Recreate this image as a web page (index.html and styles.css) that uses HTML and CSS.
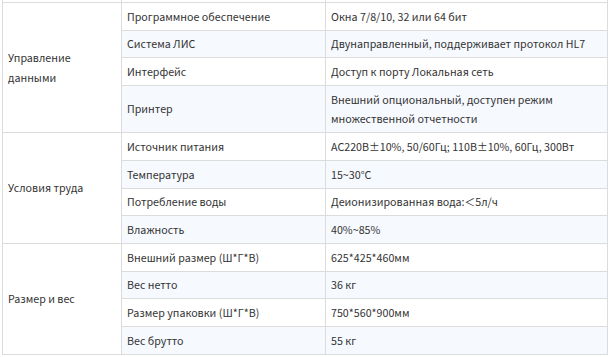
FILE: index.html
```html
<!DOCTYPE html>
<html lang="ru">
<head>
<meta charset="utf-8">
<link rel="stylesheet" href="styles.css">
</head>
<body>
<table class="spec">
  <colgroup>
    <col class="c1"><col class="c2"><col class="c3">
  </colgroup>
  <tbody>
    <tr class="cut"><td></td><td></td><td></td></tr>
    <tr>
      <td class="group" rowspan="4">Управление<br>данными</td>
      <td>Программное обеспечение</td>
      <td>Окна 7/8/10, 32 или 64 бит</td>
    </tr>
    <tr class="alt"><td>Система ЛИС</td><td>Двунаправленный, поддерживает протокол HL7</td></tr>
    <tr><td>Интерфейс</td><td>Доступ к порту Локальная сеть</td></tr>
    <tr class="alt"><td>Принтер</td><td>Внешний опциональный, доступен режим множественной отчетности</td></tr>
    <tr>
      <td class="group" rowspan="4">Условия труда</td>
      <td>Источник питания</td>
      <td>AC220В±10%, 50/60Гц; 110В±10%, 60Гц, 300Вт</td>
    </tr>
    <tr class="alt"><td>Температура</td><td>15~30°C</td></tr>
    <tr><td>Потребление воды</td><td>Деионизированная вода:＜5л/ч</td></tr>
    <tr class="alt"><td>Влажность</td><td>40%~85%</td></tr>
    <tr>
      <td class="group" rowspan="4">Размер и вес</td>
      <td>Внешний размер (Ш*Г*В)</td>
      <td>625*425*460мм</td>
    </tr>
    <tr class="alt"><td>Вес нетто</td><td>36 кг</td></tr>
    <tr><td>Размер упаковки (Ш*Г*В)</td><td>750*560*900мм</td></tr>
    <tr class="alt"><td>Вес брутто</td><td>55 кг</td></tr>
  </tbody>
</table>
</body>
</html>
```
FILE: styles.css
```css
html, body {
  margin: 0;
  padding: 0;
  background: #fff;
}
body {
  padding-left: 2px;
  font-family: "Noto Sans CJK SC", "Noto Sans", sans-serif;
  font-size: 10.7px;
  color: #333;
}
.spec {
  border-collapse: collapse;
  width: 605px;
  table-layout: fixed;
}
.c1 { width: 119px; }
.c2 { width: 204px; }
.c3 { width: 282px; }
.spec td {
  border: 1px solid #dcdcdc;
  padding: 3.55px 5px;
  line-height: 19.6px;
  vertical-align: middle;
  background: #fff;
  text-align: left;
}
.spec tr.alt td:not(.group) {
  background: #f6f9fe;
}
.spec tr.cut td {
  border-top: none;
  height: 2px;
  padding: 0;
  line-height: 0;
}
```
